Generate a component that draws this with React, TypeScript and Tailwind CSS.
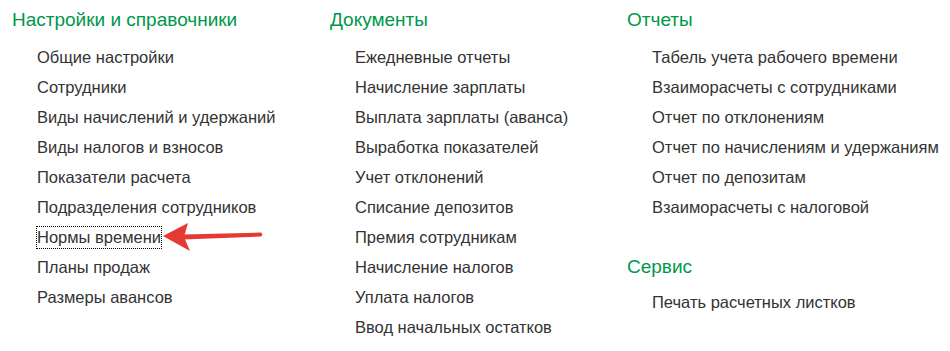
const font = { fontFamily: '"Liberation Sans", Arial, sans-serif' };

type Item = { label: string; focused?: boolean };

function Heading({ children, className = "" }: { children: string; className?: string }) {
  return (
    <div className={`text-[19px] leading-[24px] text-[#00974a] whitespace-nowrap ${className}`}>{children}</div>
  );
}

function Links({ items }: { items: Item[] }) {
  return (
    <ul className="pl-[25px]">
      {items.map((it) => (
        <li key={it.label} className="h-[30px] flex items-center text-[16.5px] text-[#333333] whitespace-nowrap">
          {it.focused ? (
            <span className="relative">
              <span className="inline-block -ml-[1px] h-[23px] leading-[21px] border border-dotted border-black">
                {it.label}
              </span>
              {/* red pointer arrow */}
              <svg
                className="absolute left-full top-1/2 -translate-y-1/2 ml-[1px]"
                width="102"
                height="30"
                viewBox="0 0 102 30"
              >
                <path d="M20 12.5 L98 10.5 Q100.5 12.5 98 14.5 L20 17.5 Z" fill="#e53a33" />
                <path d="M0 14 L25 1 L21 15 L27 29 Z" fill="#e53a33" />
              </svg>
            </span>
          ) : (
            it.label
          )}
        </li>
      ))}
    </ul>
  );
}

const settings: Item[] = [
  { label: "Общие настройки" },
  { label: "Сотрудники" },
  { label: "Виды начислений и удержаний" },
  { label: "Виды налогов и взносов" },
  { label: "Показатели расчета" },
  { label: "Подразделения сотрудников" },
  { label: "Нормы времени", focused: true },
  { label: "Планы продаж" },
  { label: "Размеры авансов" },
];

const docs: Item[] = [
  { label: "Ежедневные отчеты" },
  { label: "Начисление зарплаты" },
  { label: "Выплата зарплаты (аванса)" },
  { label: "Выработка показателей" },
  { label: "Учет отклонений" },
  { label: "Списание депозитов" },
  { label: "Премия сотрудникам" },
  { label: "Начисление налогов" },
  { label: "Уплата налогов" },
  { label: "Ввод начальных остатков" },
];

const reports: Item[] = [
  { label: "Табель учета рабочего времени" },
  { label: "Взаиморасчеты с сотрудниками" },
  { label: "Отчет по отклонениям" },
  { label: "Отчет по начислениям и удержаниям" },
  { label: "Отчет по депозитам" },
  { label: "Взаиморасчеты с налоговой" },
];

export default function App() {
  return (
    <div style={font} className="w-[950px] h-[351px] bg-white overflow-hidden">
      <div className="grid grid-cols-[318px_297px_1fr] pl-[12px] pt-[8px]">
        <div>
          <Heading className="mb-[10px]">Настройки и справочники</Heading>
          <Links items={settings} />
        </div>
        <div>
          <Heading className="mb-[10px]">Документы</Heading>
          <Links items={docs} />
        </div>
        <div>
          <Heading className="mb-[10px]">Отчеты</Heading>
          <Links items={reports} />
          <Heading className="mt-[33px] mb-[8px]">Сервис</Heading>
          <Links items={[{ label: "Печать расчетных листков" }]} />
        </div>
      </div>
    </div>
  );
}
